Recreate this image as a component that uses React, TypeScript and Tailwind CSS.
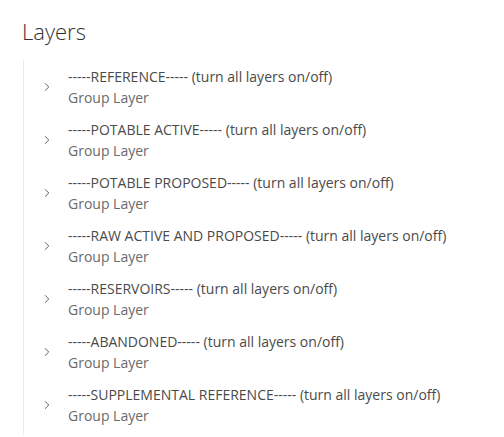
import { ChevronRight } from 'lucide-react';

const groups = [
    'REFERENCE',
    'POTABLE ACTIVE',
    'POTABLE PROPOSED',
    'RAW ACTIVE AND PROPOSED',
    'RESERVOIRS',
    'ABANDONED',
    'SUPPLEMENTAL REFERENCE',
];

export default function App() {
    return (
        <div className="h-[437px] w-[504px] overflow-hidden bg-white font-['Open_Sans','Lato',sans-serif] text-[#323232]">
            <h2 className="px-[22px] pt-[16px] text-[22px] leading-[30px] font-light text-[#323232]">
                Layers
            </h2>
            <ul className="mt-[14px] ml-[23px] border-l border-[#eaeaea] pb-[4px]">
                {groups.map((name) => (
                    <li
                        key={name}
                        className="flex items-center py-[5.5px] pl-[16px]"
                    >
                        <ChevronRight
                            size={14}
                            strokeWidth={1.6}
                            className="mr-[14px] mt-[1px] text-[#555555]"
                        />
                        <div className="text-[14px] leading-[21px]">
                            <div className="text-[#4a4a4a]">
                                -----{name}----- (turn all layers on/off)
                            </div>
                            <div className="text-[#6a6a6a]">Group Layer</div>
                        </div>
                    </li>
                ))}
            </ul>
        </div>
    );
}
